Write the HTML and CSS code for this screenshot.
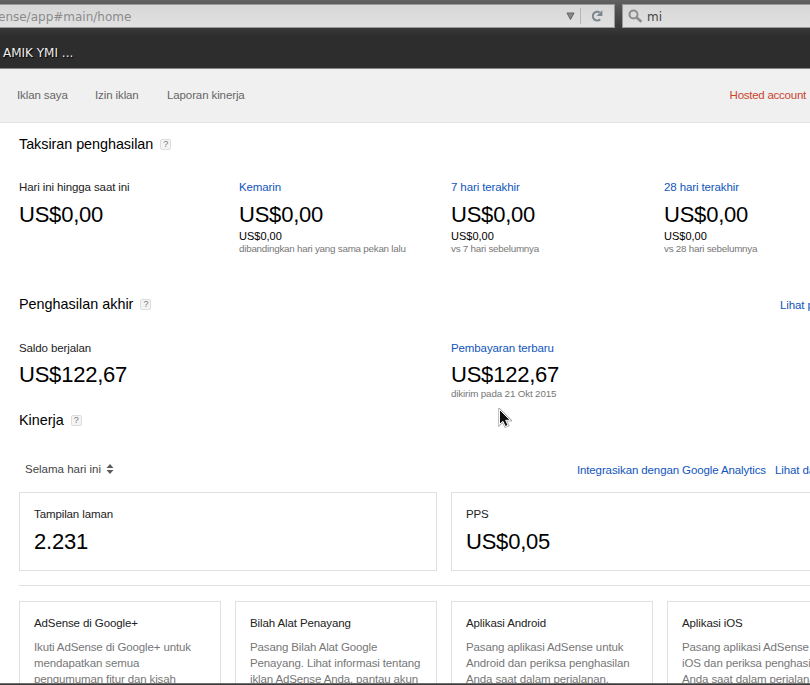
FILE: index.html
```html
<!DOCTYPE html>
<html lang="id">
<head>
<meta charset="utf-8">
<title>AdSense</title>
<link rel="stylesheet" href="styles.css">
</head>
<body>
<div class="toolbar">
  <div class="urlbar">
    <span class="url">ense/app#main/home</span>
    <svg class="drop" width="9" height="9" viewBox="0 0 9 9"><path d="M1 1h7L4.5 7.5z" fill="#8a8a8a" stroke="#606060"/></svg>
    <span class="split"></span>
    <svg class="reload" width="14" height="14" viewBox="0 0 14 14"><path d="M9.6 3.4A4.4 4.4 0 1 0 10.2 10.4" fill="none" stroke="#7d878d" stroke-width="2.1"/><path d="M12.4 1v6H6.6z" fill="#7d878d"/></svg>
  </div>
  <div class="search">
    <svg width="15" height="15" viewBox="0 0 15 15"><circle cx="5.5" cy="5.5" r="4" fill="none" stroke="#8c8c8c" stroke-width="2"/><path d="M8.6 8.6l4.8 4.2" stroke="#8c8c8c" stroke-width="2.6"/></svg>
    <span>mi</span>
  </div>
</div>
<div class="bookmarks"><span>AMIK YMI ...</span></div>
<nav class="nav">
  <a class="n1">Iklan saya</a><a class="n2">Izin iklan</a><a class="n3">Laporan kinerja</a>
  <span class="hosted">Hosted account</span>
</nav>
<main>
  <section class="estimate">
    <h2 class="tight"><span>Taksiran penghasilan</span><i class="help">?</i></h2>
    <div class="stats">
      <div><p class="label">Hari ini hingga saat ini</p><p class="value">US$0,00</p></div>
      <div><p class="label link">Kemarin</p><p class="value">US$0,00</p><p class="delta">US$0,00</p><p class="note">dibandingkan hari yang sama pekan lalu</p></div>
      <div><p class="label link">7 hari terakhir</p><p class="value">US$0,00</p><p class="delta">US$0,00</p><p class="note">vs 7 hari sebelumnya</p></div>
      <div><p class="label link">28 hari terakhir</p><p class="value">US$0,00</p><p class="delta">US$0,00</p><p class="note">vs 28 hari sebelumnya</p></div>
    </div>
  </section>
  <section class="final">
    <h2><span>Penghasilan akhir</span><i class="help">?</i><a class="link more">Lihat pembayaran</a></h2>
    <div class="balance">
      <div><p class="label">Saldo berjalan</p><p class="value">US$122,67</p></div>
      <div><p class="label link">Pembayaran terbaru</p><p class="value">US$122,67</p><p class="note">dikirim pada 21 Okt 2015</p></div>
    </div>
  </section>
  <section class="performance">
    <h2><span>Kinerja</span><i class="help">?</i></h2>
    <div class="controls">
      <span class="range">Selama hari ini</span>
      <svg width="8" height="10" viewBox="0 0 8 10"><path d="M4 0l3.5 4h-7zM4 10l3.5-4h-7z" fill="#5c5c5c"/></svg>
      <a class="link analytics">Integrasikan dengan Google Analytics</a><a class="link detail">Lihat data</a>
    </div>
    <div class="metrics">
      <div class="box"><p class="label">Tampilan laman</p><p class="value">2.231</p></div>
      <div class="box"><p class="label">PPS</p><p class="value">US$0,05</p></div>
    </div>
  </section>
  <section class="cards">
    <article class="box"><h3>AdSense di Google+</h3><p>Ikuti AdSense di Google+ untuk<br>mendapatkan semua<br>pengumuman fitur dan kisah</p></article>
    <article class="box"><h3>Bilah Alat Penayang</h3><p>Pasang Bilah Alat Google<br>Penayang. Lihat informasi tentang<br>iklan AdSense Anda, pantau akun</p></article>
    <article class="box"><h3>Aplikasi Android</h3><p>Pasang aplikasi AdSense untuk<br>Android dan periksa penghasilan<br>Anda saat dalam perjalanan.</p></article>
    <article class="box"><h3>Aplikasi iOS</h3><p>Pasang aplikasi AdSense untuk<br>iOS dan periksa penghasilan<br>Anda saat dalam perjalanan.</p></article>
  </section>
</main>
<div class="edge"></div>
<svg class="cursor" width="14" height="21" viewBox="0 0 14 21"><path d="M1.5 1.5v15l3.4-3.2 2.4 5.2 2.8-1.2-2.4-5h4.6z" fill="#111" stroke="#aaa" stroke-width="2.4"/><path d="M1.5 1.5v15l3.4-3.2 2.4 5.2 2.8-1.2-2.4-5h4.6z" fill="#111" stroke="#fff" stroke-width="1"/></svg>
</body>
</html>
```
FILE: styles.css
```css
* { box-sizing: border-box; }
html, body { height: 685px; overflow: hidden; }
body { margin: 0; width: 810px; background: #fff; color: #000; font: 11.5px/14px "Liberation Sans", Arial, sans-serif; letter-spacing: -.11px; display: flex; flex-direction: column; position: relative; }
p, h2, h3 { margin: 0; font-weight: normal; white-space: nowrap; }
.toolbar { flex: none; height: 28px; padding-top: 4px; display: flex; gap: 7px; background: linear-gradient(#626262, #575757 20%, #3a3a3a); letter-spacing: 0; }
.urlbar, .search { height: 24px; display: flex; align-items: center; border: 1px solid #9a9a9a; background: linear-gradient(#d7d7d7, #e1e1e1); font: 12px/22px "DejaVu Sans", sans-serif; }
.urlbar { flex: none; width: 615px; border-left: 0; color: #8b8b8b; }
.url { flex: 1; padding-top: 1px; margin-left: -2px; }
.drop { margin-right: 5px; }
.split { width: 1px; height: 16px; background: #b5b5b5; margin-right: 9px; }
.reload { margin-right: 10px; }
.search { flex: 1; border-right: 0; padding-left: 5px; color: #444; gap: 4px; }
.search span { padding-top: 1px; }
.bookmarks { flex: none; height: 41px; background: linear-gradient(#393939, #2d2d2d 20%); border-bottom: 1px solid #858585; padding: 17px 0 0 3px; font: 12px/17px "DejaVu Sans", sans-serif; letter-spacing: 0; color: #eee; text-shadow: 1px 1px 1px #000; }
.nav { flex: none; height: 54px; background: #f0f0f0; border-bottom: 1px solid #e3e3e3; display: flex; padding: 19px 4px 0 17px; color: #666; }
.n1 { width: 78px; } .n2 { width: 72px; }
.hosted { margin-left: auto; color: #c9442f; letter-spacing: -.25px; }
main { width: 869px; flex: 1; min-height: 0; padding-left: 19px; }
h2 { display: flex; align-items: center; height: 20px; font-size: 14.4px; line-height: 20px; letter-spacing: 0; }
.tight { letter-spacing: -.05px; }
.help { width: 11px; height: 11px; margin: 1px 0 0 7px; border: 1px solid #ddd; border-radius: 2px; background: #f4f4f4; color: #777; font: 9px/9px "Liberation Sans", sans-serif; text-align: center; }
.more { margin: 2px 0 0 auto; width: 89px; font-size: 11.5px; letter-spacing: -.11px; }
.link { color: #1155bb; }
.estimate { height: 160px; padding-top: 11px; }
.stats { display: grid; grid-template-columns: 220px 212px 213px 205px; padding-top: 26px; }
.label { color: #222; }
.label.link { color: #1155bb; }
.value { font-size: 22px; line-height: 26px; margin-top: 8px; letter-spacing: -.22px; }
.delta { font-size: 11px; line-height: 13px; margin-top: 2px; letter-spacing: 0; }
.note { font-size: 9.8px; line-height: 12px; color: #777; letter-spacing: -.23px; }
.final { height: 116px; padding-top: 11px; }
.balance { display: grid; grid-template-columns: 432px 1fr; padding-top: 27px; }
.balance .value { margin-top: 7px; }
.balance .note { letter-spacing: -.15px; }
.performance { padding-top: 11px; }
.controls { display: flex; align-items: center; height: 20px; margin: 29px 0 13px 6px; color: #444; white-space: nowrap; }
.range { letter-spacing: 0; }
.controls svg { margin-left: 5px; }
.analytics { margin: 2px 9px 0 auto; }
.detail { margin-top: 2px; width: 94px; }
.box { border: 1px solid #e0e0e0; padding-left: 14px; }
.metrics { display: grid; grid-template-columns: 1fr 1fr; gap: 14px; padding-bottom: 14px; border-bottom: 1px solid #e0e0e0; }
.metrics .box { height: 79px; padding-top: 14px; }
.cards { display: grid; grid-template-columns: repeat(4, 1fr); gap: 14px; padding-top: 15px; }
.cards .box { height: 120px; padding-top: 14px; overflow: hidden; }
h3 { font-size: 11.5px; line-height: 14px; color: #222; }
.cards p { margin-top: 9px; line-height: 16px; color: #777; letter-spacing: -.13px; }
.edge { position: absolute; left: 0; right: 0; bottom: 0; height: 2px; background: linear-gradient(#888, #222); }
.cursor { position: absolute; left: 498px; top: 408px; }
```
